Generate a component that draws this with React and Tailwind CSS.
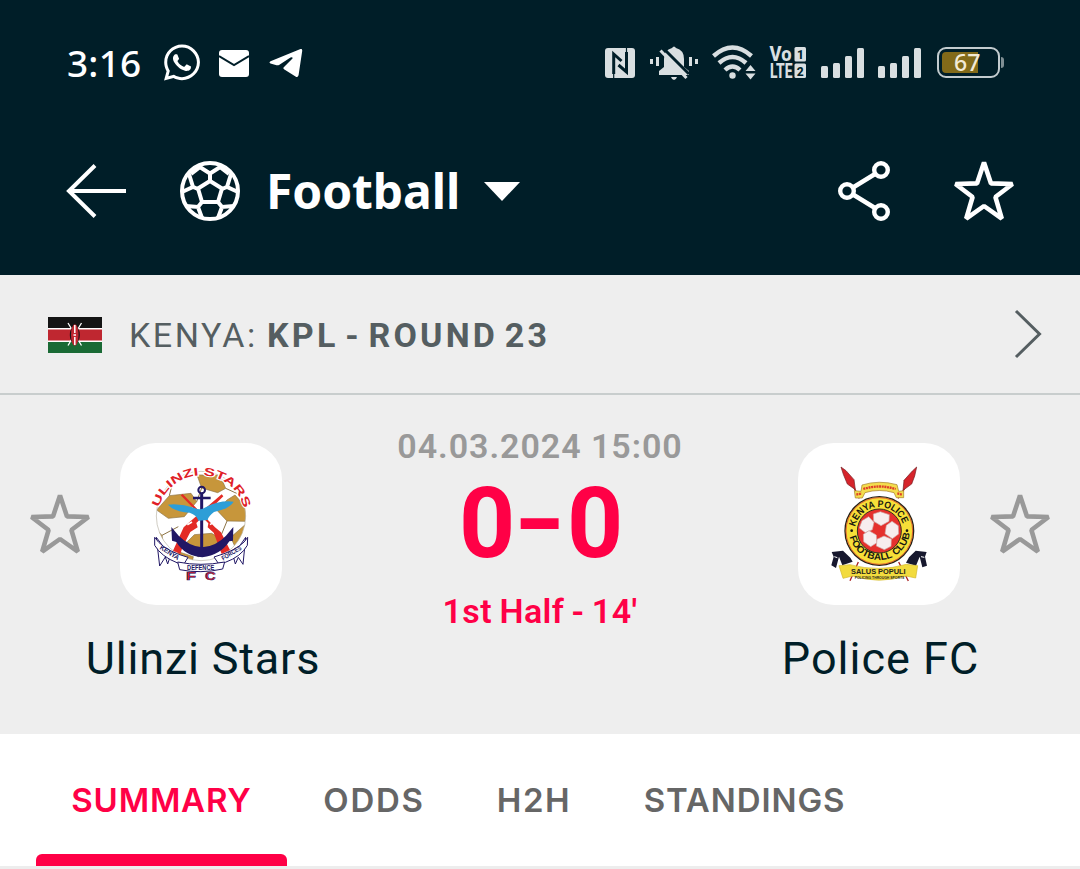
import React, { useState } from "react";
import { FaWhatsapp } from "react-icons/fa";

const tabs = ["SUMMARY", "ODDS", "H2H", "STANDINGS"];

const tabStyles = {
  SUMMARY: "w-[251px] tracking-[0.8px]",
  ODDS: "w-[174px] tracking-[1.7px]",
  H2H: "w-[146px] tracking-[1.6px]",
  STANDINGS: "w-[275px] tracking-[0.9px]",
};

const SignalIcon = ({ className }) => (
  <svg viewBox="0 0 43 30" className={`w-[43px] h-[30px] fill-[#d9dfe1] ${className}`}>
    <rect x="0" y="18" width="7" height="12" rx="1.5" />
    <rect x="12" y="15" width="7" height="15" rx="1.5" />
    <rect x="24" y="8" width="7" height="22" rx="1.5" />
    <rect x="36" y="0" width="7" height="30" rx="1.5" />
  </svg>
);

const StatusBar = () => (
  <div className="flex items-center h-[125px] pl-[67px] pr-[76px]">
    <span className="w-[98px] font-['Noto_Sans'] font-medium text-[37px] leading-none tracking-[0.2px] text-white">
      3:16
    </span>
    <FaWhatsapp className="w-[40px] h-[41px] -ml-[3px] text-white" />
    <svg viewBox="0 0 30 27" className="w-[30px] h-[27px] ml-[17px] mt-[1px]">
      <rect width="30" height="27" rx="3" fill="white" />
      <path d="M0 6 L15 15 L30 6" fill="none" stroke="#001e28" strokeWidth="2" />
    </svg>
    <svg viewBox="0 0 34 30" className="w-[34px] h-[30px] ml-[20px] mt-[1px] fill-white">
      <path d="M31.5 1 Q33.5 .5 33.2 3 L29.6 27 Q29 30 26.500 28.500 L15 21.200 Q13.800 20.200 15 19 L23.500 10.500 Q24 8.500 21.500 9.500 L10 17 Q9 17.600 7.500 17.200 L1.500 15.600 Q-.5 14.500 1.500 13.200 Z" />
    </svg>

    <div className="flex items-center ml-auto">
      <svg viewBox="0 0 30 30" className="w-[30px] h-[30px]">
        <rect width="30" height="30" rx="3" fill="#d9dfe1" />
        <path d="M8.700 26 V6 L16.500 13 M21.500 4 V24 L13.500 17" fill="none" stroke="#001e28" strokeWidth="3" />
        <path d="M21.500 0 V5 M8.700 25 V30" stroke="#001e28" strokeWidth="1.200" />
      </svg>
      <svg viewBox="0 0 48 34" className="w-[48px] h-[34px] ml-[15px]">
        <g fill="#d9dfe1">
          <rect x="0" y="13" width="3" height="5" />
          <rect x="6" y="11" width="3" height="9" />
          <rect x="39" y="11" width="3" height="9" />
          <rect x="45" y="13" width="3" height="5" />
          <path d="M22 2 Q24 -1 26 2 Q34 4 34 13 V21 L39 25 V29 H9 V25 L14 21 V13 Q14 4 22 2Z" />
          <path d="M21 31 H27 Q26 34 24 34 Q22 34 21 31Z" />
        </g>
        <path d="M13 2 L39 28" stroke="#001e28" strokeWidth="3" />
        <path d="M10.500 4.500 L36.500 32" stroke="#d9dfe1" strokeWidth="3" />
      </svg>
      <svg viewBox="0 0 44 35" className="w-[44px] h-[35px] ml-[14px]">
        <g fill="none" stroke="#d9dfe1" strokeWidth="4.400">
          <path d="M1.500 11 Q20.500 -6 39.500 11" />
          <path d="M7 18 Q20.500 6 34 18" />
          <path d="M13 25 Q20.500 18 28 25" />
        </g>
        <circle cx="20.500" cy="30.500" r="3.200" fill="#d9dfe1" />
        <path d="M33.500 26 L38.500 20 L43.500 26Z M33.500 28.500 H43.500 L38.500 34.500Z" fill="#d9dfe1" />
      </svg>
      <svg viewBox="0 0 36 31" className="w-[36px] h-[31px] ml-[14px] overflow-visible">
        <g fill="#d9dfe1" fontFamily="Roboto" fontWeight="800" fontSize="20">
          <text x="-0.5" y="14" textLength="22" lengthAdjust="spacingAndGlyphs">Vo</text>
          <text x="0" y="30.500" textLength="22.500" lengthAdjust="spacingAndGlyphs">LTE</text>
          <rect x="24.500" y="0" width="11.500" height="14.500" rx="1.500" />
          <rect x="24.500" y="16.500" width="11.500" height="14.500" rx="1.500" />
          <text x="27" y="11.500" fontSize="12" fill="#001e28">1</text>
          <text x="26.800" y="28.500" fontSize="12" fill="#001e28">2</text>
        </g>
      </svg>
      <SignalIcon className="ml-[15px]" />
      <SignalIcon className="ml-[14px]" />
      <div className="flex items-center ml-[16px]">
        <div className="relative w-[63px] h-[31px] p-[3px] rounded-[9px] border-[2.500px] border-[#c3cccf]">
          <div className="w-[36px] h-full rounded-l-[4px] bg-[#826a19]" />
          <span className="absolute left-[15px] top-[2px] font-['Noto_Sans'] font-medium text-[23px] leading-[22px] text-[#f2ead6]">
            67
          </span>
        </div>
        <div className="w-[3px] h-[11px] ml-[1px] rounded-r bg-[#7f8e93]" />
      </div>
    </div>
  </div>
);

const BallIcon = () => (
  <svg viewBox="0 0 60 60" className="w-[60px] h-[60px] ml-[54px]" fill="none" stroke="white" strokeWidth="4">
    <circle cx="30" cy="30" r="28" strokeWidth="4" />
    <path d="M30 20 L42 27.500 L38 41 H22 L18 27.500Z" strokeLinejoin="round" />
    <path d="M30 20 V12.500 M30 12.500 L19 5.500 M30 12.500 L41 5.500 M20 6 L11 13 M40 6 L49 13" />
    <path d="M18 28 L13 26 L2 31 M13 26 L9 13 M42 28 L47 26 L58 31 M47 26 L51 13" />
    <path d="M22 41 L18 46 L6 45 M18 46 L22 57 M38 41 L42 46 L54 45 M42 46 L38 57" />
  </svg>
);

const StarIcon = ({ className }) => (
  <svg viewBox="0 0 60 60" className={`w-[60px] h-[60px] ${className}`}>
    <path
      d="M30 1.500 L37 22.400 L58.500 23 L41.400 36 L47.800 57.700 L30 45 L12.200 57.700 L18.600 36 L1.500 23 L23 22.400Z"
      fill="none"
      stroke="currentColor"
      strokeWidth="4.600"
      strokeLinejoin="bevel"
    />
  </svg>
);

const NavBar = () => (
  <div className="flex items-center h-[132px] pl-[66px] pr-[66px] text-white">
    <svg viewBox="0 0 60 54" className="w-[60px] h-[54px]" fill="none" stroke="white" strokeWidth="4">
      <path d="M29 1.500 L3 27 L29 52.500 M3 27 H60" />
    </svg>
    <BallIcon />
    <h1 className="ml-[26px] w-[219px] font-['Noto_Sans'] font-bold text-[48px] leading-none tracking-[-0.1px]">
      Football
    </h1>
    <svg viewBox="0 0 36 19" className="w-[36px] h-[19px] -ml-px fill-white">
      <path d="M0 0 H36 L18 19Z" />
    </svg>
    <svg viewBox="0 0 52 60" className="w-[52px] h-[60px] ml-auto" fill="none" stroke="white" strokeWidth="4.400">
      <circle cx="9" cy="30" r="6.800" />
      <circle cx="43" cy="9" r="6.800" />
      <circle cx="43" cy="51" r="6.800" />
      <path d="M15 26.500 L37 13 M15 33.500 L37 47" />
    </svg>
    <StarIcon className="ml-[64px]" />
  </div>
);

const KenyaFlag = () => (
  <svg viewBox="0 0 54 36" className="w-[54px] h-[36px] mt-[1px]">
    <rect width="54" height="36" fill="white" />
    <rect width="54" height="11" fill="#141414" />
    <rect y="12.500" width="54" height="11" fill="#bf2730" />
    <rect y="25" width="54" height="11" fill="#1a6a35" />
    <path d="M20 6 L33.500 28.500 M33.500 6 L20 28.500" stroke="white" strokeWidth="1.300" />
    <ellipse cx="26.800" cy="18" rx="5" ry="9" fill="#141414" />
    <ellipse cx="26.800" cy="18" rx="3.800" ry="10.800" fill="#bf2730" />
    <path d="M26.800 8 V16 M26.800 20 V28 M25.500 18 H28" stroke="white" strokeWidth="1.500" />
  </svg>
);

const LeagueRow = () => (
  <div className="flex items-center h-[120px] pl-[48px] pr-[38px] border-b-2 border-[#c8cdcd] text-[#555e61] text-[34px] leading-none font-['Roboto',sans-serif]">
    <KenyaFlag />
    <span className="ml-[27px] mt-[2px] w-[138px] tracking-[2.5px]">KENYA:</span>
    <span className="mt-[2px] font-bold tracking-[3.2px] [word-spacing:-5px]">KPL - ROUND 23</span>
    <svg viewBox="0 0 28 50" className="w-[28px] h-[50px] ml-auto" fill="none" stroke="#555e61" strokeWidth="3">
      <path d="M2 2 L25.500 25 L2 48" />
    </svg>
  </div>
);

const UlinziBadge = () => (
  <svg viewBox="15 9 486 486" className="w-[162px] h-[162px]">
    <defs>
      <clipPath id="ulinziBall">
        <circle cx="258" cy="228" r="134" />
      </clipPath>
      <path id="ulinziArc" d="M132 202 A132 132 0 0 1 386 202" />
      <path id="kenyaArc" d="M133 326 L192 364" />
      <path id="forcesArc" d="M325 362 L384 326" />
    </defs>
    <g clipPath="url(#ulinziBall)">
      <circle cx="258" cy="228" r="134" fill="white" />
      <g fill="#c7963b" stroke="#8c7446" strokeWidth="2">
        <path d="M163 167 L228 160 L245 185 L208 230 L160 235 L125 210Z" />
        <path d="M246 105 L315 105 L332 145 L308 158 L260 144Z" />
        <path d="M336 180 L360 165 L400 210 L390 244 L336 243 L307 212Z" />
        <path d="M217 305 L238 284 L290 280 L310 292 L310 330 L250 350 L226 335Z" />
        <path d="M120 265 L141 286 L148 330 L120 320Z M190 335 L235 350 L230 372 L190 370Z M347 292 L395 250 L390 340 L360 320Z" />
      </g>
      <path d="M163 167 L175 120 M332 145 L365 160 M141 286 L190 260 M336 243 L320 282 M245 185 L260 144 M310 300 L347 292" stroke="#8c7446" strokeWidth="3" />
    </g>
    <circle cx="258" cy="228" r="134" fill="none" stroke="#b8b3a6" strokeWidth="2" />
    <g fill="#e32b25">
      <path d="M197 166 L203 162 L300 262 L318 277 L345 330 L320 342 L296 278 L278 262 L280 250Z" />
      <path d="M320 163 L325 169 L244 249 L248 262 L226 276 L203 320 L196 342 L174 332 L206 262 L228 242Z" />
    </g>
    <path d="M217 254 L231 246 M285 254 L296 247" stroke="white" strokeWidth="5" />
    <g stroke="#211765" fill="none">
      <circle cx="260" cy="150" r="10" strokeWidth="6" />
      <path d="M260 162 V335" strokeWidth="9" />
      <path d="M234 174 H287" strokeWidth="7" />
    </g>
    <path d="M169 261 L191 287 Q222 318 261 322 Q303 319 333 287 L355 261 L354 302 L343 304 Q316 346 262 352 Q208 347 184 306 L171 302Z" fill="#211765" />
    <path d="M159 194 Q199 190 239 204 Q256 212 272 202 Q314 180 356 185 Q344 206 297 216 Q280 229 278 240 L250 242 Q246 226 224 218 Q178 216 159 194Z" fill="#2d9ed7" />
    <g fill="white" stroke="#211765" strokeWidth="3">
      <path d="M124 292 L134 378 L151 351 L158 372 L166 348Z M392 292 L384 373 L370 352 L361 372 L354 346Z" />
      <path d="M119 292 Q139 323 191 343 L219 352 L207 372 L188 369 Q139 350 119 316Z M398 292 Q381 321 330 340 L297 351 L310 370 L331 367 Q378 350 397 316Z" />
      <path d="M188 366 Q257 380 329 366 L323 387 Q257 402 194 389Z" />
    </g>
    <g fill="#211765" fontFamily="Liberation Sans" fontWeight="700" fontSize="20">
      <text><textPath href="#kenyaArc" textLength="65">KENYA</textPath></text>
      <text><textPath href="#forcesArc" textLength="66" lengthAdjust="spacingAndGlyphs">FORCES</textPath></text>
      <text x="216" y="390" fontSize="19" textLength="82" lengthAdjust="spacingAndGlyphs">DEFENCE</text>
    </g>
    <g fontFamily="Liberation Sans" fontWeight="700" fill="#df2027">
      <text fontSize="34" stroke="white" strokeWidth="6" paintOrder="stroke">
        <textPath href="#ulinziArc" textLength="344" lengthAdjust="spacingAndGlyphs">ULINZI STARS</textPath>
      </text>
      <g fontSize="30" stroke="#211765" strokeWidth="1.500">
        <text x="213" y="419" textLength="30" lengthAdjust="spacingAndGlyphs">F</text>
        <text x="270" y="419" textLength="32" lengthAdjust="spacingAndGlyphs">C</text>
      </g>
    </g>
  </svg>
);

const PoliceBadge = () => (
  <svg viewBox="9 9 486 486" className="w-[162px] h-[162px]">
    <defs>
      <path id="policeTop" d="M180 263 A74 74 0 0 1 326 263" />
      <path id="policeBottom" d="M163 287 A92 92 0 0 0 343 287" />
    </defs>
    <g stroke="#a92020" strokeWidth="4">
      <path d="M178 145 L193 175 M329 145 L309 175 M190 366 L165 422 M311 366 L340 423" />
    </g>
    <g fill="#d6242b" stroke="#711d22" strokeWidth="2">
      <path d="M138 81 L153 92 L177 119 L181 149 L157 132 L145 103Z" />
      <path d="M365 81 L352 93 L327 121 L324 151 L350 132 L359 108Z" />
    </g>
    <path d="M178 152 L198 154 L201 135 Q252 119 306 134 L311 154 L326 152 L326 173 L304 173 L297 158 Q252 145 210 158 L202 174 L181 174Z" fill="#f3dd4d" stroke="#a37a28" strokeWidth="2" />
    <path d="M205 147 Q252 132 302 147 M184 164 L200 160 M307 160 L322 164" fill="none" stroke="#df3e27" strokeWidth="7" strokeDasharray="6 2" />
    <circle cx="253" cy="273" r="103" fill="#f6df38" stroke="#272419" strokeWidth="4" />
    <circle cx="253" cy="273" r="100" fill="none" stroke="#d92c2c" strokeWidth="2" />
    <circle cx="253" cy="273" r="66" fill="#e5312d" stroke="#35301c" strokeWidth="3" />
    <g fill="#f7eeee" stroke="#cfa4a2" strokeWidth="2">
      <path d="M235 222 L256 215 L283 224 L282 244 L258 257 L236 244Z" />
      <path d="M201 242 L221 230 L237 247 L232 269 L211 278 L193 264Z" />
      <path d="M274 256 L291 244 L310 257 L311 282 L292 296 L270 281Z" />
      <path d="M205 283 L222 272 L244 285 L246 308 L227 320 L206 305Z" />
      <path d="M246 298 L267 288 L289 297 L288 319 L268 329 L244 318Z" />
    </g>
    <g fill="#171710" fontFamily="Liberation Sans" fontWeight="700" fontSize="29">
      <text><textPath href="#policeTop" startOffset="3" textLength="193" lengthAdjust="spacingAndGlyphs">KENYA POLICE</textPath></text>
      <text><textPath href="#policeBottom" startOffset="3" textLength="255" lengthAdjust="spacingAndGlyphs">FOOTBALL CLUB</textPath></text>
    </g>
    <circle cx="170" cy="272" r="4" fill="#171710" />
    <circle cx="336" cy="272" r="4" fill="#171710" />
    <g fill="#17182e">
      <path d="M110 336 L144 332 L166 353 L173 365 L142 376 L132 350 L123 384 L109 376 L116 350Z" />
      <path d="M395 336 L362 332 L342 352 L333 368 L363 377 L374 350 L382 382 L396 377 L390 350Z" />
    </g>
    <path d="M118 350 L127 353 M378 350 L388 352" stroke="white" strokeWidth="3" />
    <path d="M132 377 L165 374 Q252 397 334 373 L368 377 L362 414 L333 408 Q252 433 173 408 L144 415Z" fill="#f2db3e" stroke="#d2b62c" strokeWidth="2" />
    <g fill="#25231a" fontFamily="Liberation Sans" fontWeight="700">
      <text x="168" y="402" fontSize="24" textLength="164" lengthAdjust="spacingAndGlyphs">SALUS POPULI</text>
      <text x="179" y="416" fontSize="11" textLength="149" lengthAdjust="spacingAndGlyphs">POLICING THROUGH SPORTS</text>
    </g>
  </svg>
);

const TeamLogo = ({ children }) => (
  <div className="w-[162px] h-[162px] rounded-[36px] bg-white overflow-hidden">{children}</div>
);

const MatchHeader = () => (
  <div className="flex justify-between h-[339px] px-[30px] pt-[48px] font-['Roboto',sans-serif]">
    <div className="w-[344px]">
      <div className="flex items-center">
        <StarIcon className="text-[#999999]" />
        <div className="ml-[30px]">
          <TeamLogo>
            <UlinziBadge />
          </TeamLogo>
        </div>
      </div>
      <p className="mt-[32px] pl-[2px] text-center text-[45px] leading-[44px] tracking-[0.8px] text-[#001e28]">Ulinzi Stars</p>
    </div>
    <div className="flex flex-col items-center w-[332px] -mt-[13px] text-[#ff0046] whitespace-nowrap">
      <p className="text-[34px] leading-[33px] font-semibold tracking-[0.95px] text-[#999999]">04.03.2024 15:00</p>
      <p className="flex justify-center mt-[13px] text-[98px] leading-[96px] font-bold">
        <span className="w-[54px] text-center">0</span>
        <span className="w-[54px] text-center scale-x-140 -translate-y-[3px]">-</span>
        <span className="w-[54px] text-center">0</span>
      </p>
      <p className="mt-[23px] text-[34px] leading-[33px] font-semibold tracking-[0.4px] [word-spacing:-1.5px]">1st Half - 14'</p>
    </div>
    <div className="w-[344px]">
      <div className="flex items-center justify-end">
        <div className="mr-[30px]">
          <TeamLogo>
            <PoliceBadge />
          </TeamLogo>
        </div>
        <StarIcon className="text-[#999999]" />
      </div>
      <p className="mt-[32px] pl-[5px] text-center text-[45px] leading-[44px] tracking-[1px] text-[#001e28]">Police FC</p>
    </div>
  </div>
);

const App = () => {
  const [activeTab, setActiveTab] = useState("SUMMARY");

  return (
    <div className="w-[1080px] h-[869px] overflow-hidden bg-white font-['Inter',sans-serif]">
      <header className="h-[275px] bg-[#001e28]">
        <StatusBar />
        <NavBar />
      </header>
      <main className="bg-[#eeeeee]">
        <LeagueRow />
        <MatchHeader />
      </main>
      <nav className="flex h-[135px] pl-[36px] bg-white border-b-[3px] border-[#ededed]">
        {tabs.map((tab) => (
          <button
            key={tab}
            onClick={() => setActiveTab(tab)}
            className={`flex flex-col items-center justify-between h-[132px] pt-[50px] text-[33px] leading-[33px] font-semibold cursor-pointer ${
              tabStyles[tab]
            } ${activeTab === tab ? "text-[#ff0046]" : "text-[#666666]"}`}
          >
            {tab}
            {activeTab === tab && <span className="w-full h-[12px] rounded-t-[6px] bg-[#ff0046]" />}
          </button>
        ))}
      </nav>
    </div>
  );
};

export default App;
